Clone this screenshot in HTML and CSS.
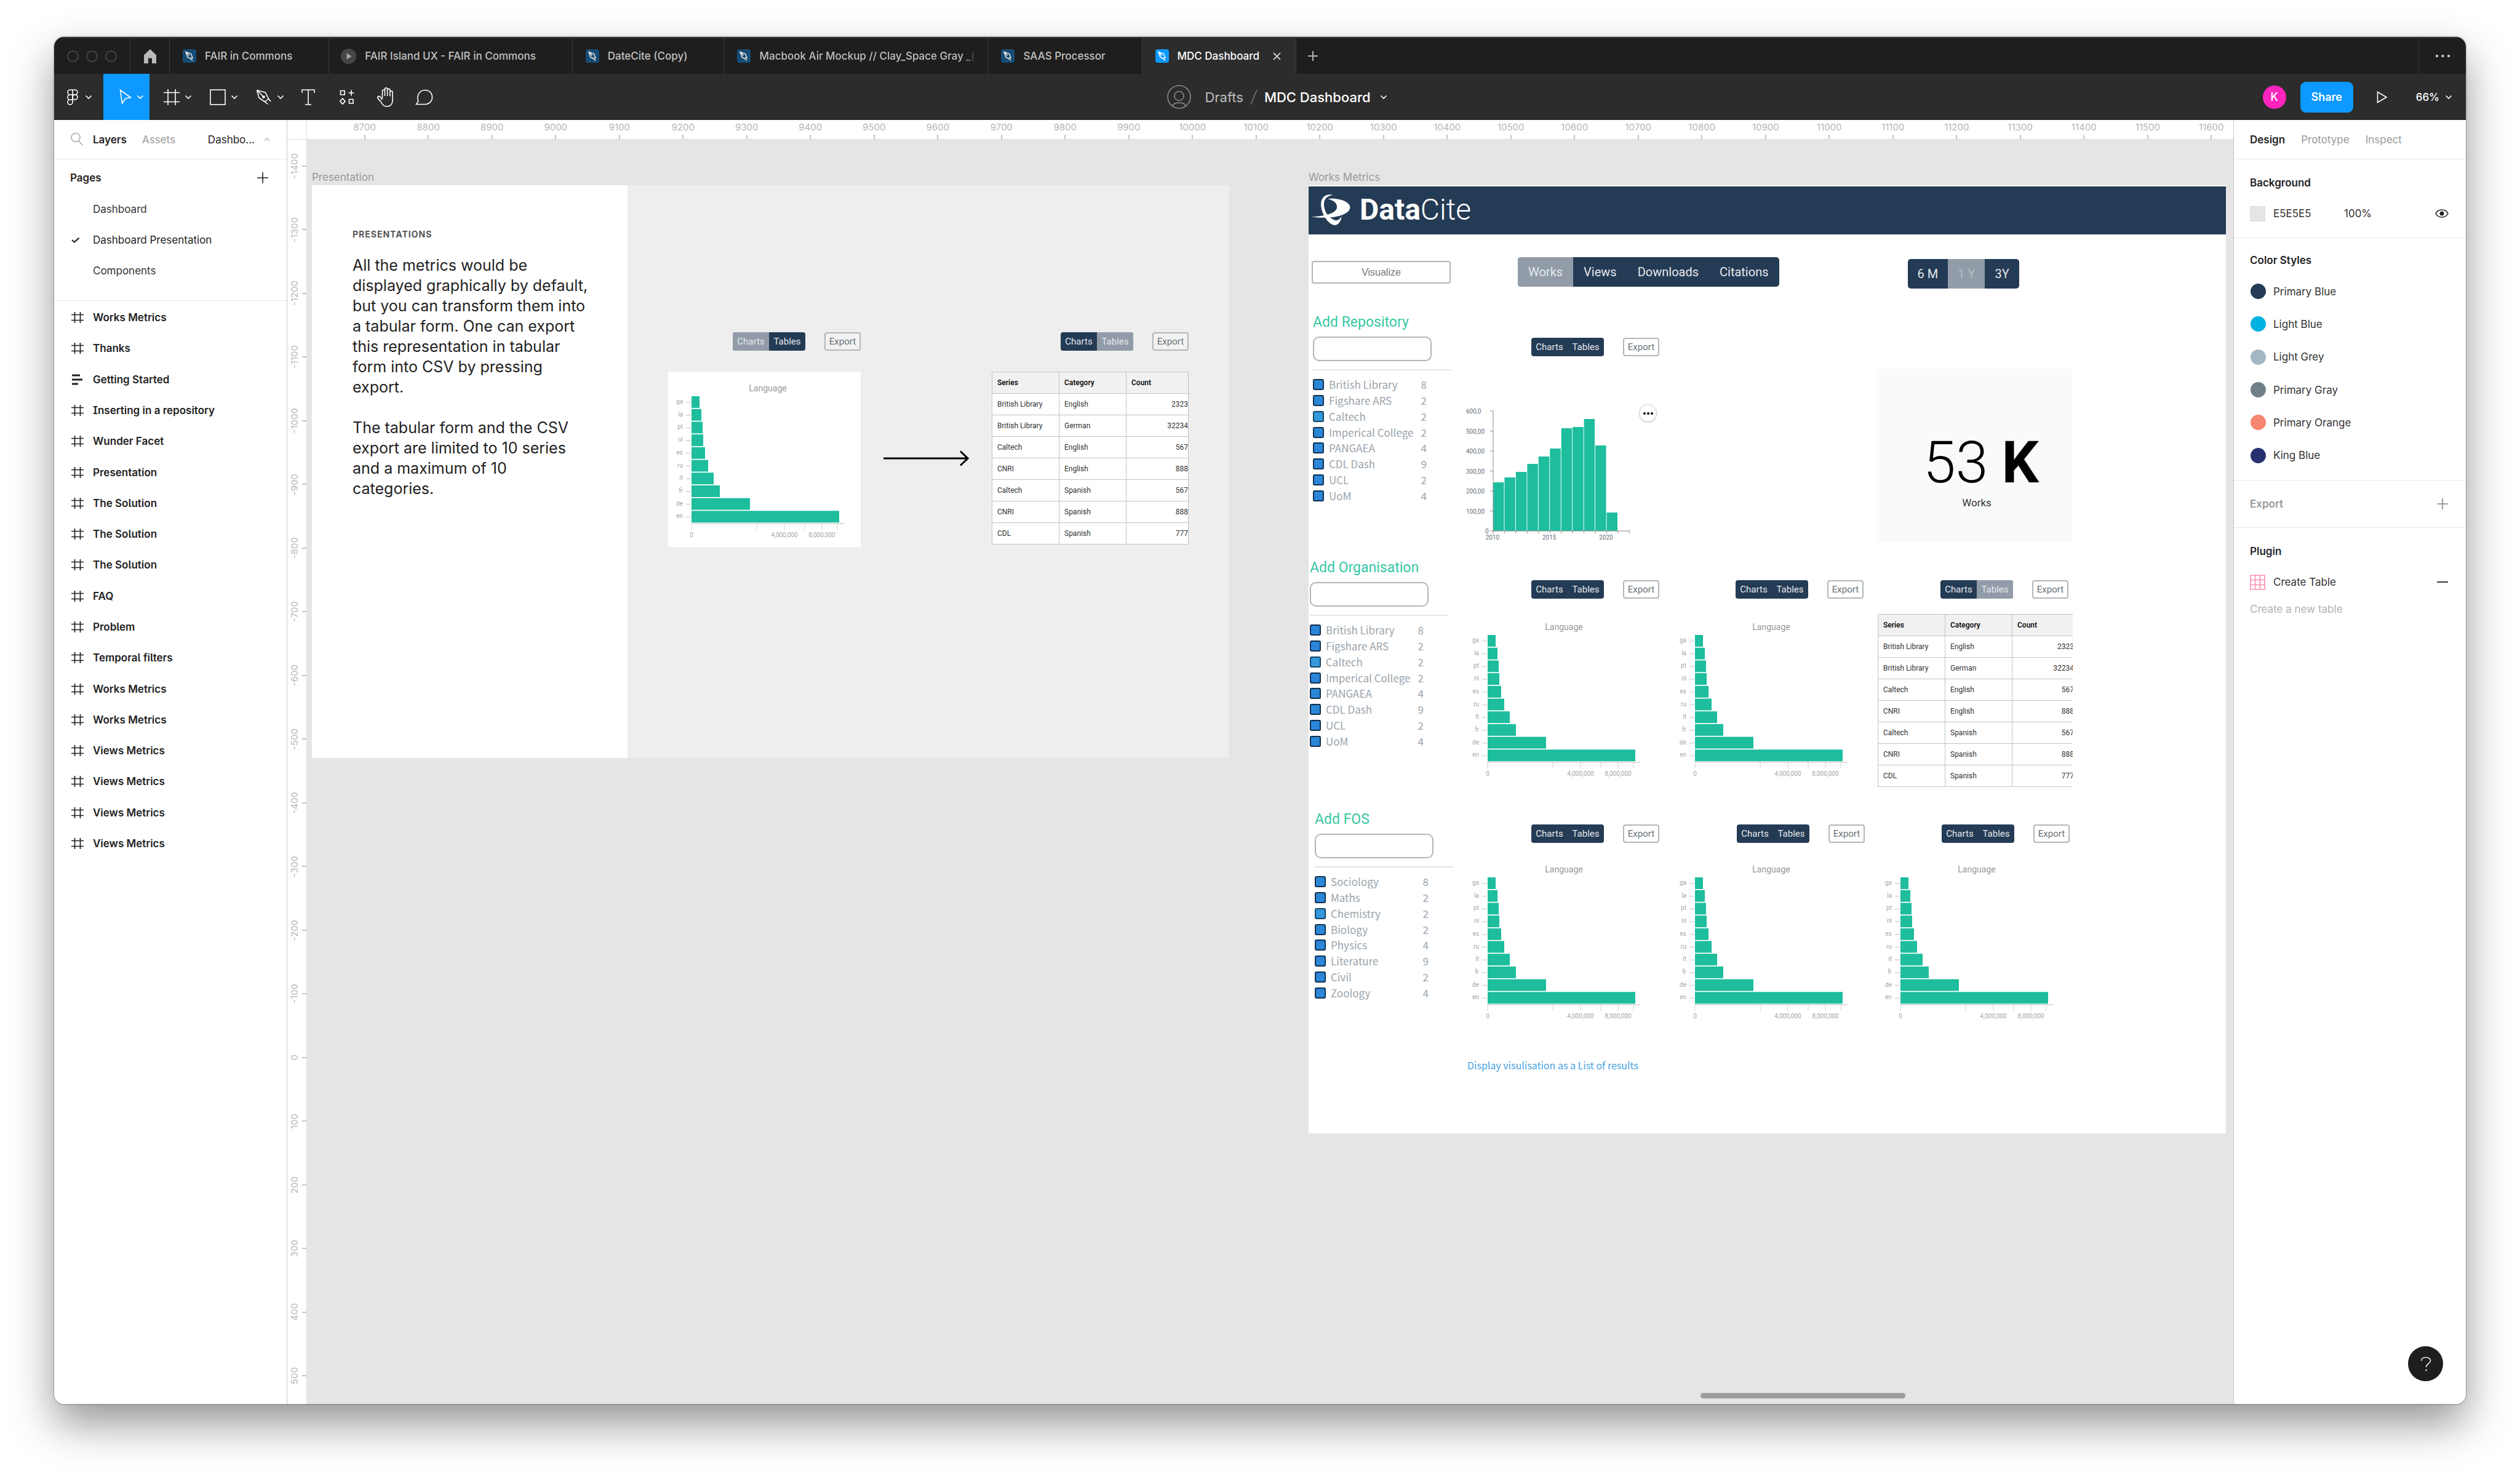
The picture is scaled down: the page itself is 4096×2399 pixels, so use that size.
FILE: index.html
```html
<!DOCTYPE html>
<html lang="en">
<head>
<meta charset="utf-8">
<title>MDC Dashboard</title>
<link rel="stylesheet" href="styles.css">
</head>
<body>
<svg class="sprite" aria-hidden="true">
  <symbol id="i-file" viewBox="0 0 22 22"><rect width="22" height="22" rx="4" fill="currentColor"/><path d="M5 4.500 L13.500 7.500 L15.500 13 L13 15.500 L8 13 Z M5 4.500 L10.500 10.500 M13 15.500 L16 18.500 M15.500 13 L16.500 15" fill="none" stroke="#fff" stroke-width="1.500"/></symbol>
  <symbol id="i-chev" viewBox="0 0 12 8"><path d="M1.500 1.500 L6 6 L10.500 1.500" fill="none" stroke="currentColor" stroke-width="1.600"/></symbol>
  <symbol id="i-frame" viewBox="0 0 26 26"><path d="M7 0V26M19 0V26M0 5.500H26M0 20.500H26" fill="none" stroke="currentColor" stroke-width="1.600"/></symbol>
  <symbol id="i-hash" viewBox="0 0 20 20"><path d="M5.500 1V19M14.500 1V19M0 5.500H20M0 14.500H20" fill="none" stroke="currentColor" stroke-width="1.700"/></symbol>
  <symbol id="i-text" viewBox="0 0 20 20"><path d="M1 3H14M1 10H18M1 17H11" fill="none" stroke="currentColor" stroke-width="3"/></symbol>
  <symbol id="i-plus" viewBox="0 0 18 18"><path d="M9 0V18M0 9H18" fill="none" stroke="currentColor" stroke-width="1.600"/></symbol>
</svg>

<div class="window">
  <header class="tabbar">
    <div class="lights"><span></span><span></span><span></span></div>
    <button class="home" aria-label="Home"><svg width="22" height="23" viewBox="0 0 22 23"><path d="M11 0 L21 9.500 V23 H14 V14.500 H8 V23 H1 V9.500 Z" fill="#b9b9b9"/></svg></button>
    <nav class="tabs">
      <a class="tab" href="#"><svg class="tab-icon"><use href="#i-file"/></svg><span>FAIR in Commons</span></a>
      <a class="tab" href="#"><svg class="proto-icon" viewBox="0 0 25 25"><circle cx="12.500" cy="12.500" r="12.500" fill="#474747"/><path d="M9.500 7.500 L17.500 12.500 L9.500 17.500 Z" fill="#a8a8a8"/></svg><span>FAIR Island UX - FAIR in Commons</span></a>
      <a class="tab" href="#"><svg class="tab-icon"><use href="#i-file"/></svg><span>DateCite (Copy)</span></a>
      <a class="tab tab-long" href="#"><svg class="tab-icon"><use href="#i-file"/></svg><span>Macbook Air Mockup // Clay_Space Gray _(</span></a>
      <a class="tab" href="#"><svg class="tab-icon"><use href="#i-file"/></svg><span>SAAS Processor</span></a>
      <a class="tab active" href="#"><svg class="tab-icon"><use href="#i-file"/></svg><span>MDC Dashboard</span><svg class="close" viewBox="0 0 13 13"><path d="M1 1 L12 12 M12 1 L1 12" stroke="#c4c4c4" stroke-width="2"/></svg></a>
    </nav>
    <button class="new-tab" aria-label="New tab"><svg width="16" height="16" viewBox="0 0 18 18"><path d="M9 0V18M0 9H18" stroke="#b5b5b5" stroke-width="2.200"/></svg></button>
    <button class="more" aria-label="More"><svg width="25" height="6" viewBox="0 0 25 6"><circle cx="3" cy="3" r="2.200"/><circle cx="12.500" cy="3" r="2.200"/><circle cx="22" cy="3" r="2.200"/></svg></button>
  </header>

  <div class="toolbar">
    <div class="tools">
      <button class="menu" aria-label="Main menu"><svg width="18" height="26" viewBox="0 0 18 26"><path d="M9 1H5a4 4 0 0 0 0 8h8a4 4 0 0 0 0-8H9V21a4 4 0 1 1-4-4h4M5 9a4 4 0 0 0 0 8" fill="none" stroke="#fff" stroke-width="1.600"/><circle cx="13" cy="13" r="4" fill="none" stroke="#fff" stroke-width="1.600"/></svg><svg class="chev"><use href="#i-chev"/></svg></button>
      <button class="tool selected" aria-label="Move"><svg width="20" height="25" viewBox="0 0 20 25"><path d="M1.500 1.500 L18.500 13.500 L10 15 L4.500 23 Z" fill="none" stroke="#fff" stroke-width="1.600"/></svg><svg class="chev"><use href="#i-chev"/></svg></button>
      <button class="tool" aria-label="Frame"><svg width="26" height="26"><use href="#i-frame"/></svg><svg class="chev"><use href="#i-chev"/></svg></button>
      <button class="tool" aria-label="Rectangle"><svg width="26" height="26" viewBox="0 0 26 26"><rect x="1" y="1" width="24" height="24" fill="none" stroke="#fff" stroke-width="1.600"/></svg><svg class="chev"><use href="#i-chev"/></svg></button>
      <button class="tool" aria-label="Pen"><svg width="26" height="26" viewBox="0 0 26 26"><path d="M1.500 1.500 L15.500 5.500 L20.500 15.500 L24 20 M1.500 1.500 L5 14 L14.500 20.500 L19.500 24.500 M14.500 20.500 L20.500 15.500 M1.500 1.500 L11 11" fill="none" stroke="#fff" stroke-width="1.600"/><circle cx="12.500" cy="12.500" r="2.300" fill="#fff"/></svg><svg class="chev"><use href="#i-chev"/></svg></button>
      <button class="tool small" aria-label="Text"><svg width="22" height="26" viewBox="0 0 22 26"><path d="M1 6V1H21V6M11 1V25M6 25H16" fill="none" stroke="#fff" stroke-width="1.600"/></svg></button>
      <button class="tool small" aria-label="Resources"><svg width="24" height="24" viewBox="0 0 24 24"><path d="M1.500 1.500H8V8H1.500ZM15.500 15.500H22V22H15.500ZM4.800 14 L9 18.700 L4.800 23.200 L0.800 18.700ZM19 0.500V9.500M14.500 5H23.500" fill="none" stroke="#fff" stroke-width="1.700"/></svg></button>
      <button class="tool small" aria-label="Hand"><svg width="29" height="32" viewBox="0 0 29 32"><path d="M9.500 18 V6 a2 2 0 0 1 4 0 V14 V3 a2.100 2.100 0 0 1 4.200 0 V14 V4.500 a2.100 2.100 0 0 1 4.200 0 V14.500 V8 a2.100 2.100 0 0 1 4.200 0 V21 c0 6-3.500 10-9 10 c-5 0-8-3-10-7.500 L2 17.500 c-1-2.500 1.500-4 3.500-2.500 L9.500 20" fill="none" stroke="#fff" stroke-width="1.600"/></svg></button>
      <button class="tool small" aria-label="Comment"><svg width="29" height="26" viewBox="0 0 29 26"><path d="M1.500 24.500 L5 19.500 C2 12 5.500 1.500 16 1.500 C23 1.500 27.500 6.500 27.500 13 C27.500 19.500 22.500 24.500 16 24.500 Z" fill="none" stroke="#fff" stroke-width="1.600"/></svg></button>
    </div>
    <div class="title">
      <svg width="39" height="39" viewBox="0 0 39 39" fill="none" stroke="#8a8a8a" stroke-width="1.600"><circle cx="19.500" cy="19.500" r="18.500"/><circle cx="19.500" cy="18" r="7.500"/><path d="M9 34.500 C11 27 28 27 30 34.500"/></svg>
      <a class="drafts" href="#">Drafts</a>
      <svg width="12" height="26" viewBox="0 0 12 26"><path d="M11 1 L1 25" stroke="#777" stroke-width="1.600"/></svg>
      <h1>MDC Dashboard</h1>
      <svg class="chev"><use href="#i-chev"/></svg>
    </div>
    <div class="actions">
      <span class="avatar">K</span>
      <button class="share">Share</button>
      <button class="play" aria-label="Present"><svg width="18" height="20" viewBox="0 0 18 20"><path d="M1.500 1.500 L16 10 L1.500 18.500 Z" fill="none" stroke="#fff" stroke-width="1.600"/></svg></button>
      <button class="zoom">66% <svg class="chev"><use href="#i-chev"/></svg></button>
    </div>
  </div>

  <div class="main">
    <aside class="left">
      <div class="panel-head">
        <svg class="search" width="20" height="24" viewBox="0 0 20 24"><circle cx="8" cy="8.500" r="7" fill="none" stroke="#aaa" stroke-width="1.600"/><path d="M13 14 L19 21" stroke="#aaa" stroke-width="1.600"/></svg>
        <b>Layers</b><span class="dim">Assets</span>
        <span class="page-name">Dashbo...</span>
        <svg width="10" height="7" viewBox="0 0 10 7"><path d="M1 6 L5 1.500 L9 6" fill="none" stroke="#bbb" stroke-width="1.600"/></svg>
      </div>
      <section class="pages">
        <div class="pages-head"><h2>Pages</h2><button aria-label="Add page"><svg width="18" height="18"><use href="#i-plus"/></svg></button></div>
        <ul>
          <li>Dashboard</li>
          <li class="current"><svg width="14" height="10" viewBox="0 0 14 10"><path d="M1 5 L5 8.500 L12.500 1.500" fill="none" stroke="#222" stroke-width="2.200"/></svg>Dashboard Presentation</li>
          <li>Components</li>
        </ul>
      </section>
      <ul class="layers">
        <li><svg><use href="#i-hash"/></svg>Works Metrics</li>
        <li><svg><use href="#i-hash"/></svg>Thanks</li>
        <li><svg><use href="#i-text"/></svg>Getting Started</li>
        <li><svg><use href="#i-hash"/></svg>Inserting in a repository</li>
        <li><svg><use href="#i-hash"/></svg>Wunder Facet</li>
        <li><svg><use href="#i-hash"/></svg>Presentation</li>
        <li><svg><use href="#i-hash"/></svg>The Solution</li>
        <li><svg><use href="#i-hash"/></svg>The Solution</li>
        <li><svg><use href="#i-hash"/></svg>The Solution</li>
        <li><svg><use href="#i-hash"/></svg>FAQ</li>
        <li><svg><use href="#i-hash"/></svg>Problem</li>
        <li><svg><use href="#i-hash"/></svg>Temporal filters</li>
        <li><svg><use href="#i-hash"/></svg>Works Metrics</li>
        <li><svg><use href="#i-hash"/></svg>Works Metrics</li>
        <li><svg><use href="#i-hash"/></svg>Views Metrics</li>
        <li><svg><use href="#i-hash"/></svg>Views Metrics</li>
        <li><svg><use href="#i-hash"/></svg>Views Metrics</li>
        <li><svg><use href="#i-hash"/></svg>Views Metrics</li>
      </ul>
    </aside>

    <main class="workspace">
      <div class="ruler-y"><div class="marks" data-from="-1400" data-to="500"></div></div>
      <div class="corner"></div>
      <div class="ruler-x"><div class="marks" data-from="8700" data-to="11600"></div></div>
      <div class="canvas">

        <section class="artboard presentation">
          <h3 class="frame-name">Presentation</h3>
          <div class="slide">
            <div class="story">
              <h4>Presentations</h4>
              <p>All the metrics would be<br>displayed graphically by default,<br>but you can transform them into<br>a tabular form. One can export<br>this representation in tabular<br>form into CSV by pressing<br>export.</p>
              <p>The tabular form and the CSV<br>export are limited to 10 series<br>and a maximum of 10<br>categories.</p>
            </div>
            <div class="exhibits">
              <div class="exhibit">
                <div class="cell-bar"><div class="switch"><button class="off">Charts</button><button>Tables</button></div><button class="export">Export</button></div>
                <div class="card chart" data-chart="language"></div>
              </div>
              <svg class="arrow" width="139" height="26" viewBox="0 0 139 26"><path d="M0 13 H137 M125 1.500 L137 13 L125 24.500" fill="none" stroke="#000" stroke-width="3"/></svg>
              <div class="exhibit wide">
                <div class="cell-bar"><div class="switch"><button>Charts</button><button class="off">Tables</button></div><button class="export">Export</button></div>
                <div class="sheet sheet-boxed">
                  <table>
                    <thead><tr><th>Series</th><th>Category</th><th>Count</th></tr></thead>
                    <tbody>
                      <tr><td>British Library</td><td>English</td><td>2323</td></tr>
                      <tr><td>British Library</td><td>German</td><td>32234</td></tr>
                      <tr><td>Caltech</td><td>English</td><td>567</td></tr>
                      <tr><td>CNRI</td><td>English</td><td>888</td></tr>
                      <tr><td>Caltech</td><td>Spanish</td><td>567</td></tr>
                      <tr><td>CNRI</td><td>Spanish</td><td>888</td></tr>
                      <tr><td>CDL</td><td>Spanish</td><td>777</td></tr>
                    </tbody>
                  </table>
                </div>
              </div>
            </div>
          </div>
        </section>

        <section class="artboard works">
          <h3 class="frame-name">Works Metrics</h3>
          <div class="dashboard">
            <div class="brand">
              <svg width="64" height="50" viewBox="0 0 64 50" fill="#fff"><path d="M27 7 C46 5 64 12 63.500 21.500 C62 34 34 41 0 36.500 C22 35.500 40 31 42 22 C43 15 38 10 27 7Z"/><path d="M36 1 C24 -2 14 5 16.500 21 C19 36 30 50 39 50 C45 49 49 43 49.500 36 C46 41 43 43 39 42 C30 39 22 30 21 18 C20 8 26 2 36 1Z"/></svg>
              <span class="wordmark"><b>Data</b>Cite</span>
            </div>
            <div class="controls">
              <button class="visualize">Visualize</button>
              <div class="switch big metrics"><button class="off">Works</button><button>Views</button><button>Downloads</button><button>Citations</button></div>
              <div class="switch big period"><button>6 M</button><button class="off faint">1 Y</button><button>3Y</button></div>
            </div>

            <div class="band band-1">
              <div class="facet">
                <label class="facet-title" for="f1">Add Repository</label>
                <input class="facet-input" id="f1" type="text">
                <ul>
                  <li><label><input type="checkbox"><span>British Library</span></label><i>8</i></li>
                  <li><label><input type="checkbox"><span>Figshare ARS</span></label><i>2</i></li>
                  <li><label><input type="checkbox"><span>Caltech</span></label><i>2</i></li>
                  <li><label><input type="checkbox"><span>Imperical College</span></label><i>2</i></li>
                  <li><label><input type="checkbox"><span>PANGAEA</span></label><i>4</i></li>
                  <li><label><input type="checkbox"><span>CDL Dash</span></label><i>9</i></li>
                  <li><label><input type="checkbox"><span>UCL</span></label><i>2</i></li>
                  <li><label><input type="checkbox"><span>UoM</span></label><i>4</i></li>
                </ul>
              </div>
              <div class="cell">
                <div class="cell-bar"><div class="switch"><button>Charts</button><button>Tables</button></div><button class="export">Export</button></div>
                <div class="years">
                  <div class="chart" data-chart="years"></div>
                  <button class="dots" aria-label="Chart options"><svg width="16" height="4" viewBox="0 0 16 4"><circle cx="2" cy="2" r="2"/><circle cx="8" cy="2" r="2"/><circle cx="14" cy="2" r="2"/></svg></button>
                </div>
              </div>
              <div class="stat"><p class="stat-value"><span>53</span><b>K</b></p><p class="stat-name">Works</p></div>
            </div>

            <div class="band band-2">
              <div class="facet">
                <label class="facet-title" for="f2">Add Organisation</label>
                <input class="facet-input" id="f2" type="text">
                <ul>
                  <li><label><input type="checkbox"><span>British Library</span></label><i>8</i></li>
                  <li><label><input type="checkbox"><span>Figshare ARS</span></label><i>2</i></li>
                  <li><label><input type="checkbox"><span>Caltech</span></label><i>2</i></li>
                  <li><label><input type="checkbox"><span>Imperical College</span></label><i>2</i></li>
                  <li><label><input type="checkbox"><span>PANGAEA</span></label><i>4</i></li>
                  <li><label><input type="checkbox"><span>CDL Dash</span></label><i>9</i></li>
                  <li><label><input type="checkbox"><span>UCL</span></label><i>2</i></li>
                  <li><label><input type="checkbox"><span>UoM</span></label><i>4</i></li>
                </ul>
              </div>
              <div class="cell">
                <div class="cell-bar"><div class="switch"><button>Charts</button><button>Tables</button></div><button class="export">Export</button></div>
                <div class="chart" data-chart="language"></div>
              </div>
              <div class="cell">
                <div class="cell-bar"><div class="switch"><button>Charts</button><button>Tables</button></div><button class="export">Export</button></div>
                <div class="chart" data-chart="language"></div>
              </div>
              <div class="cell">
                <div class="cell-bar"><div class="switch"><button>Charts</button><button class="off">Tables</button></div><button class="export">Export</button></div>
                <div class="sheet">
                  <table>
                    <thead><tr><th>Series</th><th>Category</th><th>Count</th></tr></thead>
                    <tbody>
                      <tr><td>British Library</td><td>English</td><td>2323</td></tr>
                      <tr><td>British Library</td><td>German</td><td>32234</td></tr>
                      <tr><td>Caltech</td><td>English</td><td>567</td></tr>
                      <tr><td>CNRI</td><td>English</td><td>888</td></tr>
                      <tr><td>Caltech</td><td>Spanish</td><td>567</td></tr>
                      <tr><td>CNRI</td><td>Spanish</td><td>888</td></tr>
                      <tr><td>CDL</td><td>Spanish</td><td>777</td></tr>
                    </tbody>
                  </table>
                </div>
              </div>
            </div>

            <div class="band band-3">
              <div class="facet">
                <label class="facet-title" for="f3">Add FOS</label>
                <input class="facet-input" id="f3" type="text">
                <ul>
                  <li><label><input type="checkbox"><span>Sociology</span></label><i>8</i></li>
                  <li><label><input type="checkbox"><span>Maths</span></label><i>2</i></li>
                  <li><label><input type="checkbox"><span>Chemistry</span></label><i>2</i></li>
                  <li><label><input type="checkbox"><span>Biology</span></label><i>2</i></li>
                  <li><label><input type="checkbox"><span>Physics</span></label><i>4</i></li>
                  <li><label><input type="checkbox"><span>Literature</span></label><i>9</i></li>
                  <li><label><input type="checkbox"><span>Civil</span></label><i>2</i></li>
                  <li><label><input type="checkbox"><span>Zoology</span></label><i>4</i></li>
                </ul>
              </div>
              <div class="cell">
                <div class="cell-bar"><div class="switch"><button>Charts</button><button>Tables</button></div><button class="export">Export</button></div>
                <div class="chart" data-chart="language"></div>
              </div>
              <div class="cell">
                <div class="cell-bar"><div class="switch"><button>Charts</button><button>Tables</button></div><button class="export">Export</button></div>
                <div class="chart" data-chart="language"></div>
              </div>
              <div class="cell">
                <div class="cell-bar"><div class="switch"><button>Charts</button><button>Tables</button></div><button class="export">Export</button></div>
                <div class="chart" data-chart="language"></div>
              </div>
            </div>
            <a class="list-link" href="#">Display visulisation as a List of results</a>
          </div>
        </section>

        <div class="scrollbar"></div>
      </div>
    </main>

    <aside class="right">
      <div class="panel-head"><b>Design</b><span class="dim">Prototype</span><span class="dim">Inspect</span></div>
      <section>
        <h2>Background</h2>
        <div class="fill"><span class="swatch"></span><span class="hex">E5E5E5</span><span class="alpha">100%</span>
          <svg width="22" height="16" viewBox="0 0 22 16"><path d="M1 8 C5 0 17 0 21 8 C17 16 5 16 1 8Z" fill="none" stroke="#222" stroke-width="1.600"/><circle cx="11" cy="8" r="3.500" fill="#222"/></svg></div>
      </section>
      <section class="styles">
        <h2>Color Styles</h2>
        <ul>
          <li><span class="dot c-primary"></span>Primary Blue</li>
          <li><span class="dot c-light-blue"></span>Light Blue</li>
          <li><span class="dot c-light-grey"></span>Light Grey</li>
          <li><span class="dot c-gray"></span>Primary Gray</li>
          <li><span class="dot c-orange"></span>Primary Orange</li>
          <li><span class="dot c-king"></span>King Blue</li>
        </ul>
      </section>
      <section class="export-row"><h2 class="dim">Export</h2><svg width="18" height="18"><use href="#i-plus"/></svg></section>
      <section class="plugin">
        <h2>Plugin</h2>
        <div class="fill"><svg class="grid-icon" width="25" height="25" viewBox="0 0 25 25"><path d="M1 1H24V24H1ZM1 8.500H24M1 16.500H24M8.500 1V24M16.500 1V24" fill="none" stroke="#ff8fae" stroke-width="1.600"/></svg><span class="name">Create Table</span><svg width="18" height="18" viewBox="0 0 18 18"><path d="M0 9H18" stroke="#222" stroke-width="1.800"/></svg></div>
        <p>Create a new table</p>
      </section>
      <button class="help" aria-label="Help"><svg width="18" height="24" viewBox="0 0 18 24"><path d="M1.500 7 C1.500 3 5 1.200 9 1.200 C13 1.200 16.500 3 16.500 7 C16.500 11 9.500 11.500 9.500 17" fill="none" stroke="#eee" stroke-width="1.600"/><circle cx="9.500" cy="22" r="1.300" fill="#eee"/></svg></button>
    </aside>
  </div>
</div>
<script src="app.js"></script>
</body>
</html>
```
FILE: styles.css
```css
* { box-sizing: border-box; margin: 0; padding: 0; }
html { background: #fff; }
body {
  min-height: 100vh;
  padding: 60px 88px 117px;
  display: flex;
  font-family: Inter, "Liberation Sans", sans-serif;
  font-size: 17px;
  line-height: 24px;
  color: #333;
}
ul { list-style: none; }
a { color: inherit; text-decoration: none; }
button { font: inherit; color: inherit; background: none; border: 0; }
svg { flex: none; display: block; }
.sprite { position: absolute; width: 0; height: 0; }
.dim { color: #999; }
h2 { font-size: 17px; font-weight: 600; line-height: 24px; }
h2.dim { color: #999; }

.window {
  flex: 1;
  display: flex;
  flex-direction: column;
  border-radius: 16px;
  overflow: hidden;
  background: #fff;
  box-shadow: 0 32px 70px rgba(0, 0, 0, .42), 0 0 2px 1px rgba(0, 0, 0, .25);
}

/* file tabs */
.tabbar { display: flex; height: 60px; background: #1e1e1e; border-top: 2px solid #343434; }
.lights { width: 124px; display: flex; align-items: center; justify-content: center; gap: 12px; border-right: 1px solid #3a3a3a; }
.lights span { width: 19px; height: 19px; border: 2px solid #444; border-radius: 50%; }
.home { width: 64px; display: flex; align-items: center; justify-content: center; border-right: 1px solid #3a3a3a; }
.tabs { display: flex; }
.tab {
  position: relative;
  display: flex;
  align-items: center;
  gap: 14px;
  padding: 0 59px 0 21px;
  border-right: 1px solid #3a3a3a;
  color: #c2c2c2;
  font-weight: 500;
  white-space: nowrap;
}
.tab-icon { width: 22px; height: 22px; color: #17527f; opacity: .9; }
.proto-icon { width: 25px; height: 25px; margin-left: -2px; }
.tab.tab-long { padding-right: 18px; }
.tab-long span { width: 353px; overflow: hidden; -webkit-mask-image: linear-gradient(90deg, #000 94%, transparent); mask-image: linear-gradient(90deg, #000 94%, transparent); }
.tab.active { background: #2c2c2c; color: #fff; }
.tab.active .tab-icon { color: #0d99ff; opacity: 1; }
.close { position: absolute; right: 24px; top: 23px; width: 13px; height: 13px; }
.new-tab { width: 54px; display: flex; align-items: center; justify-content: center; }
.more { margin-left: auto; width: 77px; display: flex; align-items: center; justify-content: center; border-left: 1px solid #3a3a3a; fill: #c4c4c4; }

/* toolbar */
.toolbar { display: grid; grid-template-columns: 1fr auto 1fr; height: 75px; background: #2c2c2c; color: #fff; }
.tools { display: flex; }
.tools button { display: flex; align-items: center; justify-content: center; gap: 8px; }
.tools .menu { width: 80px; padding-left: 3px; gap: 11px; }
.tool { width: 75px; padding-left: 16px; }
.tools .selected { background: #0d99ff; }
.tool.small { width: 63px; padding-left: 2px; }
.chev { width: 12px; height: 8px; }
.title { display: flex; align-items: center; gap: 11px; padding-left: 56px; font-size: 22px; }
.title h1 { font-size: 22px; font-weight: 500; padding-right: 4px; }
.drafts { color: #bdbdbd; padding-left: 11px; }
.actions { display: flex; align-items: center; justify-content: flex-end; padding-right: 22px; }
.avatar { width: 38px; height: 38px; border-radius: 50%; background: #ff24bd; font-size: 18px; font-weight: 500; line-height: 38px; text-align: center; }
.share { width: 86px; height: 50px; margin-left: 23px; border-radius: 9px; background: #0d99ff; font-size: 18px; font-weight: 600; }
.play { margin-left: 38px; }
.zoom { display: flex; align-items: center; gap: 9px; margin-left: 46px; font-size: 17px; font-weight: 500; }

/* three columns under the toolbar */
.main { flex: 1; display: grid; grid-template-columns: 379px minmax(0, 1fr) 378px; }
.panel-head { height: 64px; display: flex; align-items: center; border-bottom: 1px solid #e5e5e5; }
.panel-head b { font-weight: 600; color: #222; }

.left { border-right: 1px solid #c8c8c8; }
.left .panel-head { padding: 0 27px; }
.left .panel-head b { margin: 0 25px 0 16px; }
.page-name { margin-left: auto; padding-right: 15px; color: #222; }
.pages { padding-bottom: 23px; border-bottom: 1px solid #e5e5e5; }
.pages-head { display: flex; justify-content: space-between; align-items: center; height: 56px; padding: 4px 30px 0 26px; color: #222; }
.pages li { position: relative; height: 50px; padding-left: 63px; line-height: 50px; }
.pages li svg { position: absolute; left: 28px; top: 20px; }
.pages .current { color: #222; }
.layers { display: flex; flex-direction: column; height: 905px; margin-top: 2px; font-feature-settings: "cv05", "cv08"; }
.layers li { flex: 1; display: flex; align-items: center; gap: 15px; padding-left: 28px; font-weight: 600; color: #222; white-space: nowrap; }
.layers svg { width: 20px; height: 20px; }

/* rulers */
.workspace { display: grid; grid-template-columns: 32px minmax(0, 1fr); grid-template-rows: 32px 1fr; min-height: 2087px; overflow: hidden; }
.ruler-y { grid-column: 1; grid-row: 1 / 3; padding-top: 23px; border-right: 1px solid #e0e0e0; overflow: hidden; contain: size; }
.corner { grid-column: 1; grid-row: 1; border-bottom: 1px solid #e0e0e0; }
.ruler-x { grid-column: 2; grid-row: 1; padding-left: 42px; overflow: hidden; border-bottom: 1px solid #e0e0e0; }
.marks { display: flex; font-size: 15px; color: #b5b5b5; }
.marks span { flex: 1; display: flex; align-items: center; }
.marks em { font-style: normal; }
.ruler-x .marks { width: 3105px; height: 31px; }
.ruler-x span { flex-direction: column; line-height: 24px; }
.ruler-x span::after { content: ""; width: 2px; height: 7px; background: #c4c4c4; }
.ruler-y .marks { flex-direction: column; height: 2070px; width: 31px; line-height: 24px; }
.ruler-y span { justify-content: flex-end; }
.ruler-y em { writing-mode: vertical-rl; transform: rotate(180deg); }
.ruler-y span::after { content: ""; width: 7px; height: 2px; background: #c4c4c4; }

/* canvas and artboards */
.canvas { position: relative; grid-column: 2; grid-row: 2; background: #e5e5e5; overflow: hidden; }
.artboard { position: absolute; }
.presentation { left: 8px; top: 48px; }
.works { left: 1628px; top: 48px; }
.frame-name { height: 26px; font-size: 17px; font-weight: 400; line-height: 26px; color: #999; }
.scrollbar { position: absolute; right: 533px; bottom: 9px; width: 333px; height: 9px; border-radius: 5px; background: #9d9d9d; }

.slide { display: flex; width: 1490px; height: 931px; background: #eee; }
.story { width: 513px; padding: 70px 0 0 66px; background: #fff; color: #222; }
.story h4 { margin-bottom: 24px; font-size: 14px; font-weight: 700; line-height: 20px; letter-spacing: 1px; text-transform: uppercase; color: #555; }
.story p { margin-bottom: 33px; font-size: 25px; line-height: 33px; white-space: nowrap; }
.exhibits { display: flex; align-items: flex-start; gap: 37px; padding: 239px 0 0 66px; }
.exhibit { width: 313px; }
.exhibit.wide { width: 320px; }
.arrow { margin-top: 192px; }
.card { background: #fff; }
.exhibit .cell-bar { margin-bottom: 34px; }
.exhibit .export { background: #f2f2f2; }

/* small controls inside the artboards */
.cell-bar { display: flex; justify-content: flex-end; gap: 31px; height: 30px; }
.switch { display: flex; border-radius: 4px; overflow: hidden; background: #243b55; color: #e4e8ec; font-family: Roboto, sans-serif; font-size: 15px; }
.switch button { width: 59px; }
.switch .off { background: #929ca9; }
.export { width: 59px; border: 2px solid #b3b7bb; border-radius: 4px; background: #fff; color: #6b7178; font-family: Roboto, sans-serif; font-size: 15px; line-height: 24px; }
.switch.big { height: 48px; border-radius: 5px; font-size: 20px; }
.switch.big button { width: auto; padding: 0 17px; }

.sheet { overflow: hidden; font-family: Roboto, sans-serif; font-size: 12px; line-height: 18px; color: #333; }
.sheet-boxed { border-right: 1px solid #bbb; }
.sheet table { width: 328px; table-layout: fixed; border-collapse: collapse; background: #fff; }
.sheet th, .sheet td { height: 35px; padding: 0 8px; border: 1px solid #c4c4c4; text-align: left; }
.sheet th { background: #f1f1f1; font-weight: 600; color: #111; }
.sheet td:last-child { text-align: right; }

.dashboard { width: 1491px; padding-top: 2px; padding-bottom: 98px; background: #fff; font-family: Roboto, sans-serif; }
.brand { display: flex; align-items: center; gap: 15px; height: 78px; padding: 0 4px 2px; background: #243b55; }
.wordmark { color: #fff; font-size: 48px; line-height: 60px; font-weight: 300; }
.wordmark b { font-weight: 700; }
.controls { display: flex; align-items: flex-start; height: 91px; margin-top: 37px; padding-left: 5px; }
.visualize { width: 226px; height: 37px; margin-top: 6px; border: 2px solid #b3b7bb; border-radius: 4px; color: #777; font-family: "Liberation Sans", Arial, sans-serif; font-size: 16px; line-height: 30px; }
.metrics { margin-left: 109px; }
.period { margin: 3px 0 0 209px; }
.switch.period button { padding: 0 16px; }
.switch .faint { color: #b3bbc4; }

.band { display: grid; grid-template-columns: 233px 317px 312px 313px; column-gap: 20px; min-height: 399px; }
.band-2 { min-height: 409px; }
.band-3 { grid-template-columns: 233px 317px 314px 313px; min-height: 400px; }
.band-1 .cell { padding-top: 40px; }
.band-2 .cell { padding-top: 35px; }
.band-3 .cell { padding-top: 23px; }
.band-2 .chart { margin-top: 19px; }
.band-3 .chart { margin-top: 16px; }
.band-2 .sheet { width: 317px; margin: 25px 0 0 3px; }

.facet { width: 245px; padding-left: 7px; }
.band-2 .facet { padding-left: 2px; width: 240px; }
.band-3 .facet { padding-left: 10px; width: 248px; }
.facet-title { display: block; font-size: 23px; line-height: 30px; color: #35c7a3; }
.facet-input { display: block; width: 193px; height: 40px; margin: 8px 0 13px; border: 2px solid #b4b4b4; border-radius: 10px; background: #fff; }
.facet ul { display: flex; flex-direction: column; width: 225px; height: 219px; padding: 10px 40px 0 0; border-top: 2px solid #e2e6e8; font-family: "Noto Sans CJK SC", sans-serif; font-size: 17px; line-height: 24px; color: #9aa4ac; }
.facet li { flex: 1; display: flex; align-items: center; justify-content: space-between; white-space: nowrap; }
.facet label:not(.facet-title) { display: flex; align-items: center; gap: 8px; }
.facet i { font-style: normal; }
.facet input[type="checkbox"] { appearance: none; width: 18px; height: 18px; border: 2px solid #10304f; border-radius: 3px; background: #2c86d8; }
.facet li:nth-child(3) input[type="checkbox"] { background: #3498db; border-color: #164668; }

.years { display: flex; align-items: flex-start; margin-top: 78px; }
.dots { width: 29px; height: 29px; margin-left: -6px; display: flex; align-items: center; justify-content: center; border: 1px solid #ccc; border-radius: 50%; background: #fff; box-shadow: 0 1px 2px rgba(0, 0, 0, .15); }
.chart svg { overflow: visible; font-family: Roboto, sans-serif; }

.stat { grid-column: 4; width: 320px; height: 283px; margin-top: 90px; padding-top: 98px; background: #f9fafa; color: #000; text-align: center; }
.stat-value { display: flex; justify-content: center; gap: 22px; padding-left: 22px; font-size: 95px; line-height: 110px; font-weight: 300; }
.stat-value b { font-weight: 700; }
.stat-name { padding-left: 8px; font-size: 17px; line-height: 20px; color: #333; }
.list-link { display: inline-block; margin: 2px 0 0 258px; font-family: "Noto Sans CJK SC", sans-serif; font-size: 16px; line-height: 24px; color: #4aa3df; }

/* design panel */
.right { position: relative; border-left: 1px solid #c8c8c8; }
.right .panel-head { gap: 26px; padding-left: 26px; }
.right section { padding: 26px 28px 0 26px; border-bottom: 1px solid #e5e5e5; height: 128px; }
.right h2 { color: #222; }
.fill { display: flex; align-items: center; height: 26px; margin-top: 25px; }
.swatch { width: 25px; height: 25px; background: #e5e5e5; border: 1px solid #dcdcdc; }
.hex { width: 115px; margin-left: 13px; }
.fill > :last-child { margin-left: auto; }
.right .styles { height: 394px; padding-top: 24px; }
.styles ul { display: flex; flex-direction: column; height: 320px; margin-top: 12px; }
.styles li { flex: 1; display: flex; align-items: center; gap: 12px; padding-left: 1px; }
.dot { width: 25px; height: 25px; border-radius: 50%; }
.c-primary { background: #243b55; }
.c-light-blue { background: #00b1e2; }
.c-light-grey { background: #a3b7c3; }
.c-gray { background: #717f87; }
.c-orange { background: #f6866f; }
.c-king { background: #28316f; }
.right .export-row { display: flex; align-items: center; justify-content: space-between; height: 77px; padding: 0 29px 0 26px; color: #888; }
.right .export-row h2 { color: #999; }
.right .plugin { height: auto; border-bottom: 0; padding-right: 29px; }
.plugin .name { margin-left: 13px; }
.plugin p { margin-top: 19px; color: #b3b3b3; }
.help { position: absolute; right: 37px; bottom: 37px; width: 57px; height: 57px; display: flex; align-items: center; justify-content: center; border-radius: 50%; background: #1e1e1e; }
```
FILE: app.js
```js
// Ruler marks every 100 units.
document.querySelectorAll('.marks').forEach(function (el) {
  for (var n = +el.dataset.from; n <= +el.dataset.to; n += 100) {
    var mark = document.createElement('span');
    var label = document.createElement('em');
    label.textContent = n;
    mark.appendChild(label);
    el.appendChild(mark);
  }
});

var GREEN = '#1dbd9d';

// Horizontal bars: datasets per language on a square-root axis.
function languageChart() {
  var rows = [['ga', 13], ['la', 16], ['pt', 18], ['nl', 19], ['es', 22], ['ru', 27], ['it', 36], ['fr', 46], ['de', 95], ['en', 240]];
  var x0 = 38, y0 = 40, pitch = 20.7;
  var s = '<svg width="313" height="285" viewBox="0 0 313 285">';
  s += '<text x="162" y="32" font-size="14" text-anchor="middle" fill="#999">Language</text>';
  rows.forEach(function (r, i) {
    var y = y0 + i * pitch;
    s += '<rect x="' + x0 + '" y="' + y + '" width="' + r[1] + '" height="19" fill="' + GREEN + '"/>';
    s += '<path d="M' + (x0 - 9) + ' ' + (y + 10) + 'h8" stroke="#ddd" stroke-width="2"/>';
    s += '<text x="' + (x0 - 14) + '" y="' + (y + 12) + '" font-size="10" text-anchor="end" fill="#a5a5a5">' + r[0] + '</text>';
  });
  s += '<path d="M' + x0 + ' 247h248" stroke="#ddd" stroke-width="2"/>';
  [0, 106, 151, 184, 212, 237].forEach(function (t) {
    s += '<path d="M' + (x0 + t) + ' 247v10" stroke="#d0d0d0"/>';
  });
  [[0, '0'], [151, '4,000,000'], [212, '8,000,000']].forEach(function (t) {
    s += '<text x="' + (x0 + t[0]) + '" y="269" font-size="10" text-anchor="middle" fill="#a5a5a5">' + t[1] + '</text>';
  });
  return s + '</svg>';
}

// Vertical bars: works per year.
function yearsChart() {
  var heights = [79, 87, 96, 109, 121, 134, 167, 169, 182, 139, 30];
  var x0 = 47, base = 206, step = 18.45;
  var s = '<svg width="290" height="224" viewBox="0 0 290 224">';
  heights.forEach(function (h, i) {
    s += '<rect x="' + (x0 + i * step) + '" y="' + (base - h) + '" width="17.5" height="' + h + '" fill="' + GREEN + '"/>';
  });
  s += '<path d="M' + x0 + ' 11V' + base + 'h222" fill="none" stroke="#8b8b8b"/>';
  for (var t = 0; t <= 12; t++) s += '<path d="M' + (x0 + t * step) + ' ' + base + 'v4" stroke="#8b8b8b"/>';
  ['0', '100,00', '200,00', '300,00', '400,00', '500,00', '600,0'].forEach(function (l, i) {
    var y = base - i * 32.5;
    s += '<path d="M' + (x0 - 5) + ' ' + y + 'h5" stroke="#8b8b8b"/>';
    s += '<text x="' + (i ? 3 : 34) + '" y="' + (y + 4) + '" font-size="10" fill="#66707c">' + l + '</text>';
  });
  [['2010', 0], ['2015', 5], ['2020', 10]].forEach(function (l) {
    s += '<text x="' + (x0 - 1 + l[1] * step) + '" y="220" font-size="10" text-anchor="middle" fill="#66707c">' + l[0] + '</text>';
  });
  return s + '</svg>';
}

document.querySelectorAll('.chart').forEach(function (el) {
  el.innerHTML = el.dataset.chart === 'years' ? yearsChart() : languageChart();
});
```
